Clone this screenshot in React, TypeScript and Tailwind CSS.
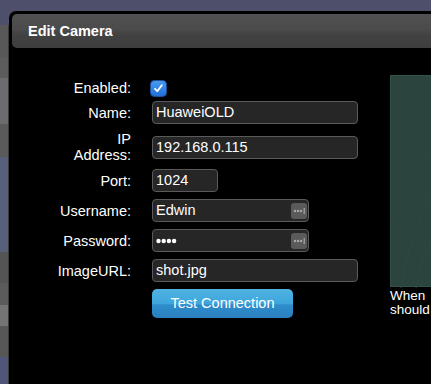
import React from "react";

function Checkbox() {
  return (
    <svg width="17" height="17" viewBox="0 0 17 17">
      <defs>
        <linearGradient id="cb" x1="0" y1="0" x2="0" y2="1">
          <stop offset="0" stopColor="#4a9cf0" />
          <stop offset="1" stopColor="#1f6fd6" />
        </linearGradient>
      </defs>
      <rect x="0.5" y="0.5" width="16" height="16" rx="4" fill="url(#cb)" stroke="#1a4f9a" />
      <path d="M5 8.8 L7.3 11.2 L11.8 5.2" fill="none" stroke="#ffffff" strokeWidth="1.8" strokeLinecap="round" strokeLinejoin="round" />
    </svg>
  );
}

function KeyIcon() {
  return (
    <svg width="16" height="16" viewBox="0 0 16 16" className="shrink-0">
      <rect x="0" y="0" width="16" height="16" rx="3" fill="#5a5a5a" />
      <circle cx="4" cy="8" r="1.2" fill="#a8a8a8" />
      <circle cx="7" cy="8" r="1.2" fill="#a8a8a8" />
      <circle cx="10" cy="8" r="1.2" fill="#a8a8a8" />
      <rect x="12.6" y="5" width="1.2" height="6" fill="#a8a8a8" />
    </svg>
  );
}

function Field({ w, children, keyIcon }: { w: string; children: React.ReactNode; keyIcon?: boolean }) {
  return (
    <div
      className={`${w} h-[23px] bg-[#262626] border border-[#5a5a5a] rounded-[4px] pl-[3px] pr-[1px] flex items-center justify-between text-white text-[14.5px] leading-none`}
    >
      <span>{children}</span>
      {keyIcon ? <KeyIcon /> : null}
    </div>
  );
}

function Row({ label, mt, h, children }: { label: React.ReactNode; mt: string; h: string; children: React.ReactNode }) {
  return (
    <div className={`flex items-center ${mt} ${h}`}>
      <div className="w-[119px] shrink-0 text-right text-white text-[14.5px] leading-[16px]">{label}</div>
      <div className="ml-[21px] flex items-center">{children}</div>
    </div>
  );
}

function Dots() {
  return (
    <svg width="21" height="6" viewBox="0 0 21 6" className="block">
      <circle cx="2.5" cy="3" r="2.2" fill="#ffffff" />
      <circle cx="7.7" cy="3" r="2.2" fill="#ffffff" />
      <circle cx="12.9" cy="3" r="2.2" fill="#ffffff" />
      <circle cx="18.1" cy="3" r="2.2" fill="#ffffff" />
    </svg>
  );
}

export default function App() {
  const strip = [
    ["h-[32px]", "bg-[#585858]"],
    ["h-[21px]", "bg-[#5c5c5c]"],
    ["h-[46px]", "bg-[#6b6c70]"],
    ["h-[33px]", "bg-[#5a5a5a]"],
    ["h-[95px]", "bg-[#56607a]"],
    ["h-[31px]", "bg-[#545454]"],
    ["h-[22px]", "bg-[#5b5b5b]"],
    ["h-[21px]", "bg-[#747476]"],
    ["h-[31px]", "bg-[#575757]"],
    ["h-[27px]", "bg-[#50567a]"],
  ];
  return (
    <div className="relative w-[431px] h-[384px] overflow-hidden bg-[#4d4f6b] font-['Liberation_Sans',Arial,sans-serif]">
      {/* page behind the dialog */}
      <div className="flex flex-col">
        <div className="h-[25px] bg-[#4d4f6b]" />
        <div className="w-[9px] flex flex-col border-r border-[#3a3a3a]">
          {strip.map(([h, bg], i) => (
            <div key={i} className={`${h} ${bg}`} />
          ))}
        </div>
      </div>

      {/* dialog */}
      <div className="absolute left-[9px] top-[11px] w-[460px] h-[380px] bg-black rounded-tl-[7px] p-[3px]">
        <div className="h-[34px] rounded-[5px] bg-[linear-gradient(#515151,#4b4b4b_45%,#424242_60%,#3e3e3e)] flex items-center pl-[16px]">
          <span className="text-white font-bold text-[14.5px] leading-none">Edit Camera</span>
        </div>

        <div className="flex">
          <div className="flex flex-col w-[346px] shrink-0">
            <Row label="Enabled:" mt="mt-[32px]" h="h-[16px]">
              <div className="-ml-[2px]">
                <Checkbox />
              </div>
            </Row>
            <Row label="Name:" mt="mt-[5px]" h="h-[23px]">
              <Field w="w-[206px]">HuaweiOLD</Field>
            </Row>
            <Row
              label={
                <>
                  IP
                  <br />
                  Address:
                </>
              }
              mt="mt-[11px]"
              h="h-[24px]"
            >
              <Field w="w-[206px]">192.168.0.115</Field>
            </Row>
            <Row label="Port:" mt="mt-[10px]" h="h-[23px]">
              <Field w="w-[66px]">1024</Field>
            </Row>
            <Row label="Username:" mt="mt-[7px]" h="h-[23px]">
              <Field w="w-[157px]" keyIcon>
                Edwin
              </Field>
            </Row>
            <Row label="Password:" mt="mt-[7px]" h="h-[23px]">
              <Field w="w-[157px]" keyIcon>
                <Dots />
              </Field>
            </Row>
            <Row label="ImageURL:" mt="mt-[7px]" h="h-[23px]">
              <Field w="w-[206px]">shot.jpg</Field>
            </Row>
            <Row label="" mt="mt-[7px]" h="h-[29px]">
              <button className="w-[141px] h-[29px] rounded-[5px] bg-[linear-gradient(#4fb3e2,#3ea6dc_50%,#2f8ccb_55%,#2a7fbf)] text-white text-[14.5px] leading-none">
                Test Connection
              </button>
            </Row>
          </div>

          <div className="ml-[32px] flex flex-col">
            <div className="mt-[27px] w-[200px] h-[212px] bg-[#2c443e] border border-[#34504a]">
              <svg width="200" height="212" viewBox="0 0 200 212">
                <path d="M10 212 C 20 150, 40 100, 120 20" fill="none" stroke="#30493f" strokeWidth="1" />
                <path d="M25 212 C 35 160, 60 110, 140 40" fill="none" stroke="#30493f" strokeWidth="1" />
                <path d="M0 150 C 10 120, 25 90, 60 50" fill="none" stroke="#2f473f" strokeWidth="1" />
              </svg>
            </div>
            <div className="mt-[2px] text-white text-[13.5px] leading-[14px]">
              When
              <br />
              should
            </div>
          </div>
        </div>
      </div>
    </div>
  );
}
